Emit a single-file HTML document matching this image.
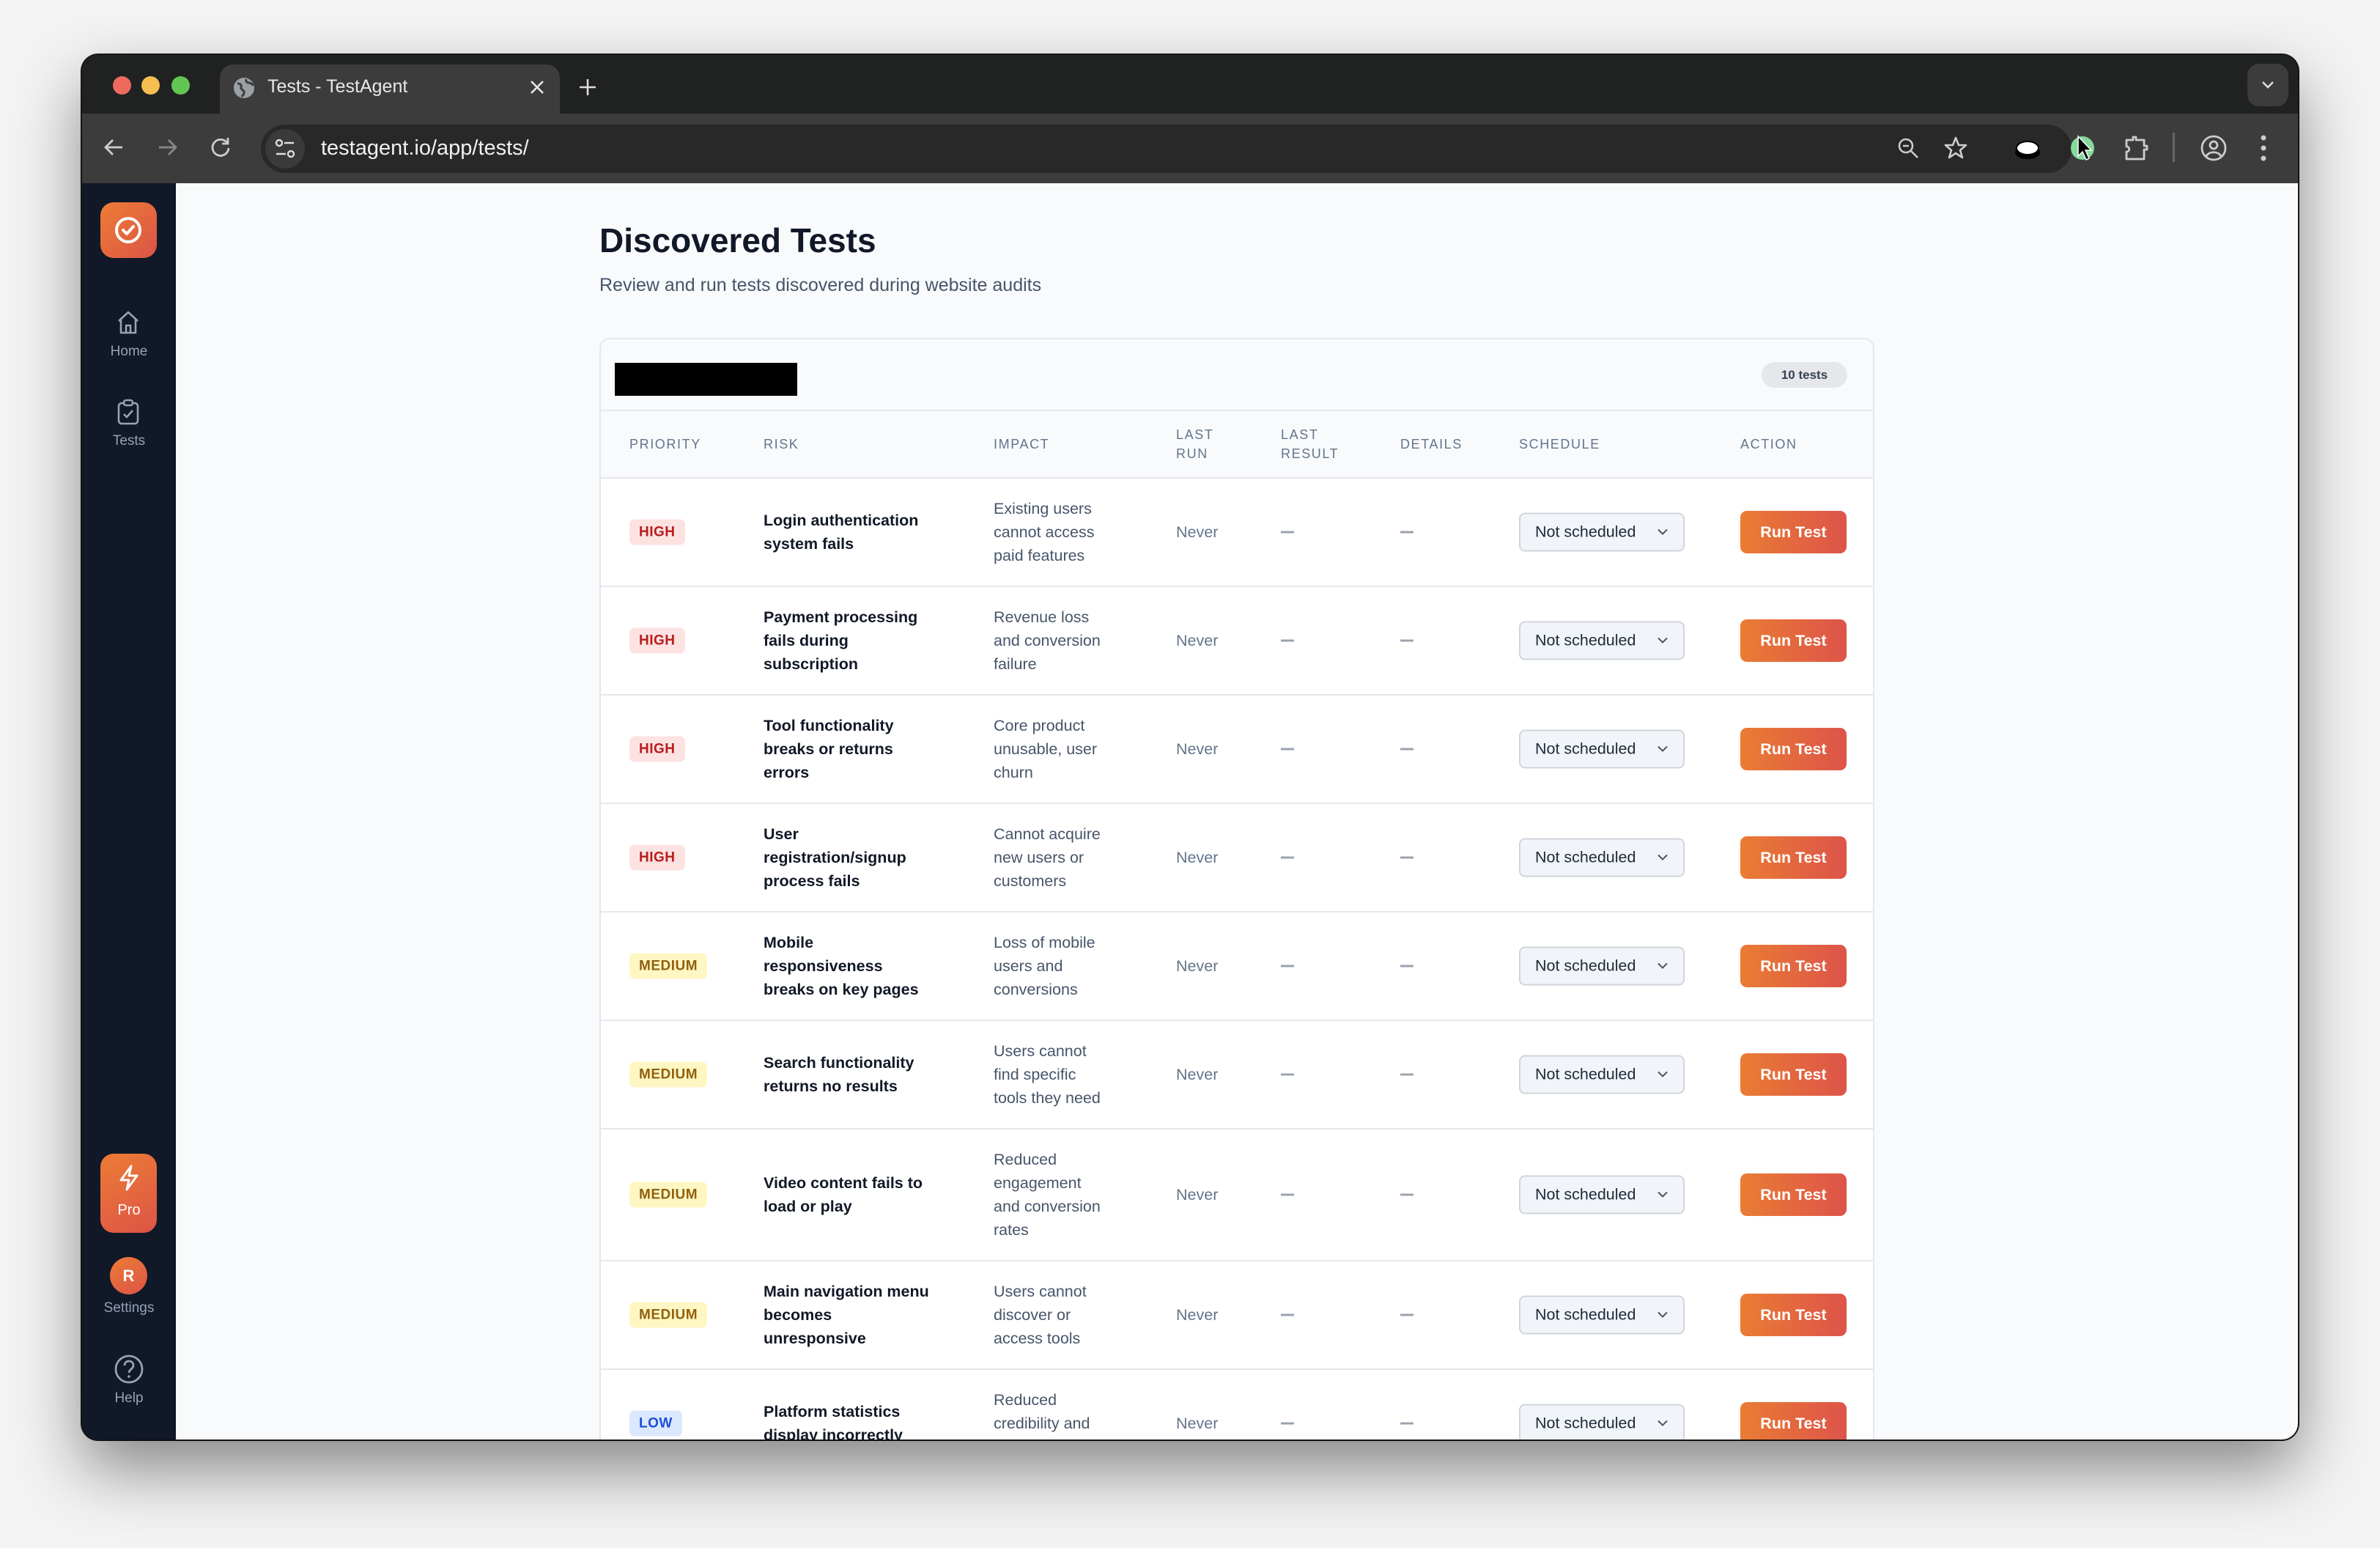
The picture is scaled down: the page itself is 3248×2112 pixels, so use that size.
<!DOCTYPE html>
<html><head><meta charset="utf-8"><style>
*{box-sizing:border-box;margin:0;padding:0}
body{width:3248px;height:2112px;background:#f3f3f3;font-family:"Liberation Sans",sans-serif;position:relative;overflow:hidden}
.win{position:absolute;left:112px;top:75px;width:3024px;height:1889px;border-radius:22px;background:#202221;overflow:hidden;box-shadow:0 40px 90px rgba(0,0,0,.45),0 0 0 2px #1a1a1a}
.abs{position:absolute}
.tl{position:absolute;top:29px;width:25px;height:25px;border-radius:50%}
.toolbar{position:absolute;left:0;top:80px;width:3024px;height:95px;background:#3c3c3c}
.url{position:absolute;left:244px;top:15px;width:2471px;height:66px;background:#282828;border-radius:33px}
.side{position:absolute;left:0;top:175px;width:128px;height:1714px;background:#111827}
.main{position:absolute;left:128px;top:175px;width:2896px;height:1714px;background:#f8fafc;overflow:hidden}
.lbl{position:absolute;left:0;width:128px;text-align:center;color:#94a3b8;font-size:19px}
.card{position:absolute;left:578px;top:211px;width:1740px;height:1600px;background:#fff;border:2px solid #e5e7eb;border-radius:14px;overflow:hidden}
.th{position:absolute;top:0;font-size:18px;letter-spacing:1.6px;color:#64748b;line-height:26px}
.row{position:absolute;left:0;width:1740px;border-top:2px solid #e5e7eb;background:#fff}
.c{position:absolute;top:50%;transform:translateY(-50%);font-size:21.5px;line-height:32px;white-space:nowrap}
.risk{left:222px;color:#111827;font-weight:bold}
.imp{left:536px;color:#475569}
.never{left:785px;color:#64748b}
.dash{width:18px;height:3px;background:#9ca3af;top:50%}
.badge{left:39px;height:35px;line-height:35px;padding:0 13px;border-radius:7px;font-size:19px;font-weight:bold;letter-spacing:.5px}
.high{background:#fde2e2;color:#b91c1c}
.med{background:#fef7c3;color:#92600e}
.low{background:#dbe8fd;color:#1d4ed8}
.sel{left:1253px;width:226px;height:53px;border:2px solid #d1d5db;background:#f1f5f9;border-radius:8px;color:#1f2937;font-size:21.5px;line-height:49px;padding-left:20px}
.sel svg{position:absolute;right:20px;top:19px}
.btn{left:1555px;width:145px;height:58px;border-radius:9px;background:linear-gradient(90deg,#e97c34,#dd5449);color:#fff;font-weight:bold;font-size:21.5px;line-height:58px;text-align:center}
</style></head><body>
<div class="win">
  <div class="tl" style="left:42px;background:#ee6a5f"></div>
  <div class="tl" style="left:81px;background:#f5be4f"></div>
  <div class="tl" style="left:122px;background:#62c655"></div>
  <div class="abs" style="left:188px;top:13px;width:464px;height:72px;background:#3c3c3c;border-radius:18px 18px 0 0"></div>
  <svg class="abs" style="left:206px;top:30px" width="30" height="30" viewBox="0 0 30 30"><circle cx="15" cy="15" r="14" fill="#9aa0a6"/><path d="M6 9c4 0 6 2 5 5s3 3 4 6-2 5-3 7M18 3c-1 3 1 5 4 5s4 3 6 3" stroke="#3c3c3c" stroke-width="3" fill="none"/></svg>
  <div class="abs" style="left:253px;top:29px;font-size:25px;color:#e8e8e8">Tests - TestAgent</div>
  <svg class="abs" style="left:610px;top:33px" width="22" height="22" viewBox="0 0 22 22"><path d="M3 3L19 19M19 3L3 19" stroke="#e8e8e8" stroke-width="2.6"/></svg>
  <svg class="abs" style="left:677px;top:31px" width="26" height="26" viewBox="0 0 26 26"><path d="M13 2V24M2 13H24" stroke="#ddd" stroke-width="2.6"/></svg>
  <div class="abs" style="left:2955px;top:12px;width:56px;height:58px;background:#3c3c3c;border-radius:16px"></div>
  <svg class="abs" style="left:2974px;top:35px" width="18" height="12" viewBox="0 0 18 12"><path d="M2 2L9 9L16 2" stroke="#ddd" stroke-width="2.6" fill="none"/></svg>
  <div class="toolbar">
    <svg class="abs" style="left:28px;top:31px" width="30" height="30" viewBox="0 0 30 30"><path d="M27 15H4M14 5L4 15L14 25" stroke="#ccc" stroke-width="2.8" fill="none"/></svg>
    <svg class="abs" style="left:102px;top:31px" width="30" height="30" viewBox="0 0 30 30"><path d="M3 15H26M16 5L26 15L16 25" stroke="#888" stroke-width="2.8" fill="none"/></svg>
    <svg class="abs" style="left:174px;top:31px" width="30" height="30" viewBox="0 0 30 30"><path d="M24 9A11 11 0 1 0 26 16" stroke="#ccc" stroke-width="2.8" fill="none"/><path d="M25 2V10H17" stroke="#ccc" stroke-width="2.8" fill="none"/></svg>
    <div class="url">
      <div class="abs" style="left:6px;top:6px;width:54px;height:54px;border-radius:50%;background:#3a3a3a"></div>
      <svg class="abs" style="left:18px;top:18px" width="30" height="30" viewBox="0 0 30 30"><circle cx="7" cy="7" r="4" stroke="#ddd" stroke-width="2.4" fill="none"/><path d="M14 7H27M3 22H16" stroke="#ddd" stroke-width="2.4"/><circle cx="23" cy="22" r="4" stroke="#ddd" stroke-width="2.4" fill="none"/></svg>
      <div class="abs" style="left:82px;top:16px;font-size:29px;color:#f0f0f0">testagent.io/app/tests/</div>
      <svg class="abs" style="left:2232px;top:16px" width="34" height="34" viewBox="0 0 34 34"><circle cx="13" cy="13" r="9" stroke="#ccc" stroke-width="2.6" fill="none"/><path d="M9 13H17M20 20L29 29" stroke="#ccc" stroke-width="2.6"/></svg>
      <svg class="abs" style="left:2296px;top:15px" width="34" height="34" viewBox="0 0 34 34"><path d="M17 3L21 13L31 13L23 20L26 30L17 24L8 30L11 20L3 13L13 13Z" stroke="#ccc" stroke-width="2.6" fill="none" stroke-linejoin="round"/></svg>
    </div>
    <svg class="abs" style="left:2636px;top:31px" width="38" height="34" viewBox="0 0 38 34"><ellipse cx="19" cy="22" rx="17" ry="9" fill="#000"/><ellipse cx="19" cy="16" rx="15" ry="9" fill="#fff" stroke="#000" stroke-width="2"/></svg>
    <svg class="abs" style="left:2713px;top:28px" width="34" height="38" viewBox="0 0 34 38"><circle cx="17" cy="19" r="16" fill="#86d99c"/><path d="M11 3L11 30L17 24L22 35L26 33L21 22L29 22Z" fill="#000" stroke="#fff" stroke-width="1.5"/></svg>
    <svg class="abs" style="left:2786px;top:28px" width="36" height="38" viewBox="0 0 36 38"><path d="M4 8H13V4H17V8H28V16H32V21H28V34H4V24C9 24 9 17 4 17Z" stroke="#ccc" stroke-width="2.8" fill="none" stroke-linejoin="round"/></svg>
    <div class="abs" style="left:2853px;top:26px;width:3px;height:40px;background:#666"></div>
    <svg class="abs" style="left:2890px;top:28px" width="38" height="38" viewBox="0 0 38 38"><circle cx="19" cy="19" r="16" stroke="#ccc" stroke-width="2.8" fill="none"/><circle cx="19" cy="15" r="5" stroke="#ccc" stroke-width="2.8" fill="none"/><path d="M9 30C13 23 25 23 29 30" stroke="#ccc" stroke-width="2.8" fill="none"/></svg>
    <svg class="abs" style="left:2971px;top:28px" width="12" height="38" viewBox="0 0 12 38"><circle cx="6" cy="5" r="3.5" fill="#ccc"/><circle cx="6" cy="19" r="3.5" fill="#ccc"/><circle cx="6" cy="33" r="3.5" fill="#ccc"/></svg>
  </div>
  <div class="side">
    <div class="abs" style="left:25px;top:26px;width:77px;height:76px;border-radius:18px;background:linear-gradient(135deg,#ec7c35,#dc5447)"></div>
    <svg class="abs" style="left:43px;top:44px" width="40" height="40" viewBox="0 0 40 40"><circle cx="20" cy="20" r="16" stroke="#fff" stroke-width="4" fill="none"/><path d="M13 20L18 25L27 15" stroke="#fff" stroke-width="4" fill="none" stroke-linecap="round" stroke-linejoin="round"/></svg>
    <svg class="abs" style="left:46px;top:173px" width="34" height="34" viewBox="0 0 34 34"><path d="M4 15L17 3L30 15M7 13V31H27V13M14 31V21H20V31" stroke="#94a3b8" stroke-width="2.6" fill="none" stroke-linejoin="round"/></svg>
    <div class="lbl" style="top:219px">Home</div>
    <svg class="abs" style="left:47px;top:294px" width="32" height="36" viewBox="0 0 32 36"><rect x="3" y="6" width="26" height="28" rx="4" stroke="#94a3b8" stroke-width="2.6" fill="none"/><rect x="10" y="2" width="12" height="7" rx="3" stroke="#94a3b8" stroke-width="2.6" fill="#111827"/><path d="M10 21L14 25L22 16" stroke="#94a3b8" stroke-width="2.6" fill="none"/></svg>
    <div class="lbl" style="top:341px">Tests</div>
    <div class="abs" style="left:25px;top:1324px;width:77px;height:108px;border-radius:18px;background:linear-gradient(150deg,#ec7c35,#dc5447)"></div>
    <svg class="abs" style="left:48px;top:1338px" width="32" height="38" viewBox="0 0 32 38"><path d="M19 3L5 22H16L13 35L27 16H16Z" stroke="#fff" stroke-width="3" fill="none" stroke-linejoin="round"/></svg>
    <div class="lbl" style="top:1390px;color:#fff;font-size:20px">Pro</div>
    <div class="abs" style="left:38px;top:1465px;width:51px;height:51px;border-radius:50%;background:linear-gradient(150deg,#ec7c35,#dc5447);color:#fff;font-weight:bold;font-size:22px;text-align:center;line-height:51px">R</div>
    <div class="lbl" style="top:1524px">Settings</div>
    <svg class="abs" style="left:41px;top:1595px" width="46" height="46" viewBox="0 0 46 46"><circle cx="23" cy="23" r="18" stroke="#94a3b8" stroke-width="2.8" fill="none"/><path d="M17 18C17 10 29 10 29 18C29 23 23 23 23 28" stroke="#94a3b8" stroke-width="2.8" fill="none"/><circle cx="23" cy="33" r="1.8" fill="#94a3b8"/></svg>
    <div class="lbl" style="top:1647px">Help</div>
  </div>
  <div class="main">
    <div class="abs" style="left:578px;top:51px;font-size:46px;font-weight:bold;color:#111827">Discovered Tests</div>
    <div class="abs" style="left:578px;top:125px;font-size:25px;color:#475569">Review and run tests discovered during website audits</div>
    <div class="card">
      <div class="abs" style="left:0;top:0;width:1740px;height:96px;background:#f8fafc"></div>
      <div class="abs" style="left:19px;top:32px;width:249px;height:45px;background:#000"></div>
      <div class="abs" style="left:1584px;top:31px;width:117px;height:35px;border-radius:18px;background:#e5e7eb;font-size:17px;font-weight:bold;color:#374151;text-align:center;line-height:35px">10 tests</div>
      <div class="abs" style="left:0;top:96px;width:1740px;height:92px;background:#f8fafc;border-top:2px solid #e5e7eb">
        <div class="th" style="left:39px;top:32px">PRIORITY</div>
        <div class="th" style="left:222px;top:32px">RISK</div>
        <div class="th" style="left:536px;top:32px">IMPACT</div>
        <div class="th" style="left:785px;top:19px">LAST<br>RUN</div>
        <div class="th" style="left:928px;top:19px">LAST<br>RESULT</div>
        <div class="th" style="left:1091px;top:32px">DETAILS</div>
        <div class="th" style="left:1253px;top:32px">SCHEDULE</div>
        <div class="th" style="left:1555px;top:32px">ACTION</div>
      </div>
      <div id="rows"></div>
    </div>
  </div>
</div>
<script>
(function(){
var R=[["high","HIGH","Login authentication<br>system fails","Existing users<br>cannot access<br>paid features",148],
["high","HIGH","Payment processing<br>fails during<br>subscription","Revenue loss<br>and conversion<br>failure",148],
["high","HIGH","Tool functionality<br>breaks or returns<br>errors","Core product<br>unusable, user<br>churn",148],
["high","HIGH","User<br>registration/signup<br>process fails","Cannot acquire<br>new users or<br>customers",148],
["med","MEDIUM","Mobile<br>responsiveness<br>breaks on key pages","Loss of mobile<br>users and<br>conversions",148],
["med","MEDIUM","Search functionality<br>returns no results","Users cannot<br>find specific<br>tools they need",148],
["med","MEDIUM","Video content fails to<br>load or play","Reduced<br>engagement<br>and conversion<br>rates",180],
["med","MEDIUM","Main navigation menu<br>becomes<br>unresponsive","Users cannot<br>discover or<br>access tools",148],
["low","LOW","Platform statistics<br>display incorrectly","Reduced<br>credibility and<br>trust",148]];
var y=188,h="";
R.forEach(function(r){h+='<div class="row" style="top:'+y+'px;height:'+r[4]+'px"><div class="c badge '+r[0]+'">'+r[1]+'</div><div class="c risk">'+r[2]+'</div><div class="c imp">'+r[3]+'</div><div class="c never">Never</div><div class="c dash" style="left:928px"></div><div class="c dash" style="left:1091px"></div><div class="c sel">Not scheduled<svg width="16" height="10" viewBox="0 0 16 10"><path d="M2 2L8 8L14 2" stroke="#4b5563" stroke-width="2" fill="none"/></svg></div><div class="c btn">Run Test</div></div>';y+=r[4];});
document.getElementById("rows").innerHTML=h;
})();
</script>
</body></html>
